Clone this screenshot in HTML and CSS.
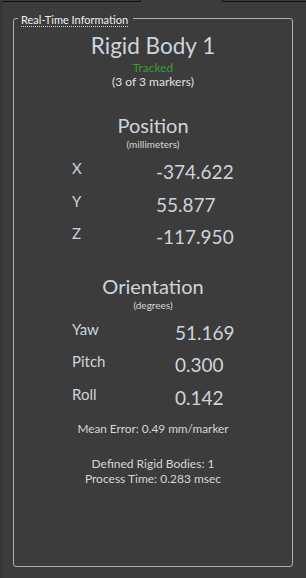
FILE: index.html
```html
<!DOCTYPE html>
<html>
<head>
<meta charset="utf-8">
<link rel="stylesheet" href="styles.css">
</head>
<body>
<div class="tabs"><div class="tab-l"></div><div class="tab-gap"></div><div class="tab-r"></div></div>
<div class="group">
  <div class="legend"><span class="legend-text">Real-Time Information</span></div>
  <div class="title">Rigid Body 1</div>
  <div class="status">Tracked</div>
  <div class="small">(3 of 3 markers)</div>

  <div class="section">Position</div>
  <div class="unit">(millimeters)</div>
  <div class="rows rows-pos">
    <div class="label">X</div><div class="value">-374.622</div>
    <div class="label">Y</div><div class="value">55.877</div>
    <div class="label">Z</div><div class="value">-117.950</div>
  </div>

  <div class="section section-or">Orientation</div>
  <div class="unit">(degrees)</div>
  <div class="rows rows-or">
    <div class="label">Yaw</div><div class="value">51.169</div>
    <div class="label">Pitch</div><div class="value">0.300</div>
    <div class="label">Roll</div><div class="value">0.142</div>
  </div>

  <div class="small mean">Mean Error: 0.49 mm/marker</div>
  <div class="info">
    <div>Defined Rigid Bodies: 1</div>
    <div>Process Time: 0.283 msec</div>
  </div>
</div>
</body>
</html>
```
FILE: styles.css
```css
html, body {
  margin: 0;
  padding: 0;
}
body {
  width: 306px;
  height: 578px;
  background: #3c3c3c;
  font-family: Lato, "Open Sans", sans-serif;
  overflow: hidden;
  box-sizing: border-box;
  border-left: 3px solid #353535;
}
.tabs {
  display: flex;
  height: 2px;
}
.tab-l {
  width: 138px;
  box-sizing: border-box;
  border-bottom: 1px solid #101010;
  border-right: 1px solid #101010;
}
.tab-gap {
  width: 81px;
}
.tab-r {
  flex: 1;
  box-sizing: border-box;
  border-bottom: 1px solid #101010;
  border-left: 1px solid #101010;
}
.group {
  position: relative;
  margin: 16px 0 0 10px;
  width: 280px;
  height: 549px;
  box-sizing: border-box;
  border: 1px solid #b0b0b0;
  border-radius: 3px;
  text-align: center;
}
.legend {
  position: absolute;
  left: 4px;
  top: -6px;
  padding: 0 5px 0 3px;
  background: #3c3c3c;
  font-size: 11px;
  line-height: 13px;
  color: #f0f0f0;
  text-align: left;
}
.legend-text {
  display: inline-block;
  border-bottom: 1px dotted #d8d8d8;
}
.title {
  margin-top: 13px;
  font-size: 22.5px;
  line-height: 28px;
  color: #ccd5de;
}
.status {
  margin-top: 1px;
  font-size: 12px;
  line-height: 14px;
  color: #3a9d3a;
}
.small {
  font-size: 12px;
  line-height: 14px;
  color: #e2e2e2;
}
.section {
  margin-top: 24px;
  font-size: 20px;
  line-height: 25px;
  color: #ccd5de;
}
.section-or {
  margin-top: 17px;
}
.unit {
  font-size: 10px;
  line-height: 12px;
  color: #d8d8d8;
}
.rows {
  display: grid;
  grid-auto-rows: 32.5px;
  margin-top: 9px;
  padding-left: 58px;
  text-align: left;
}
.rows-pos {
  grid-template-columns: 84px 1fr;
}
.rows-or {
  grid-template-columns: 103px 1fr;
}
.label {
  font-size: 15px;
  line-height: 18px;
  color: #ccd5de;
}
.value {
  font-size: 19px;
  line-height: 26px;
  color: #ccd5de;
}
.mean {
  margin-top: 4.5px;
  font-size: 11.8px;
  color: #d6d6d6;
}
.info {
  margin-top: 20.5px;
  font-size: 12px;
  line-height: 15px;
  color: #d6d6d6;
}
```
